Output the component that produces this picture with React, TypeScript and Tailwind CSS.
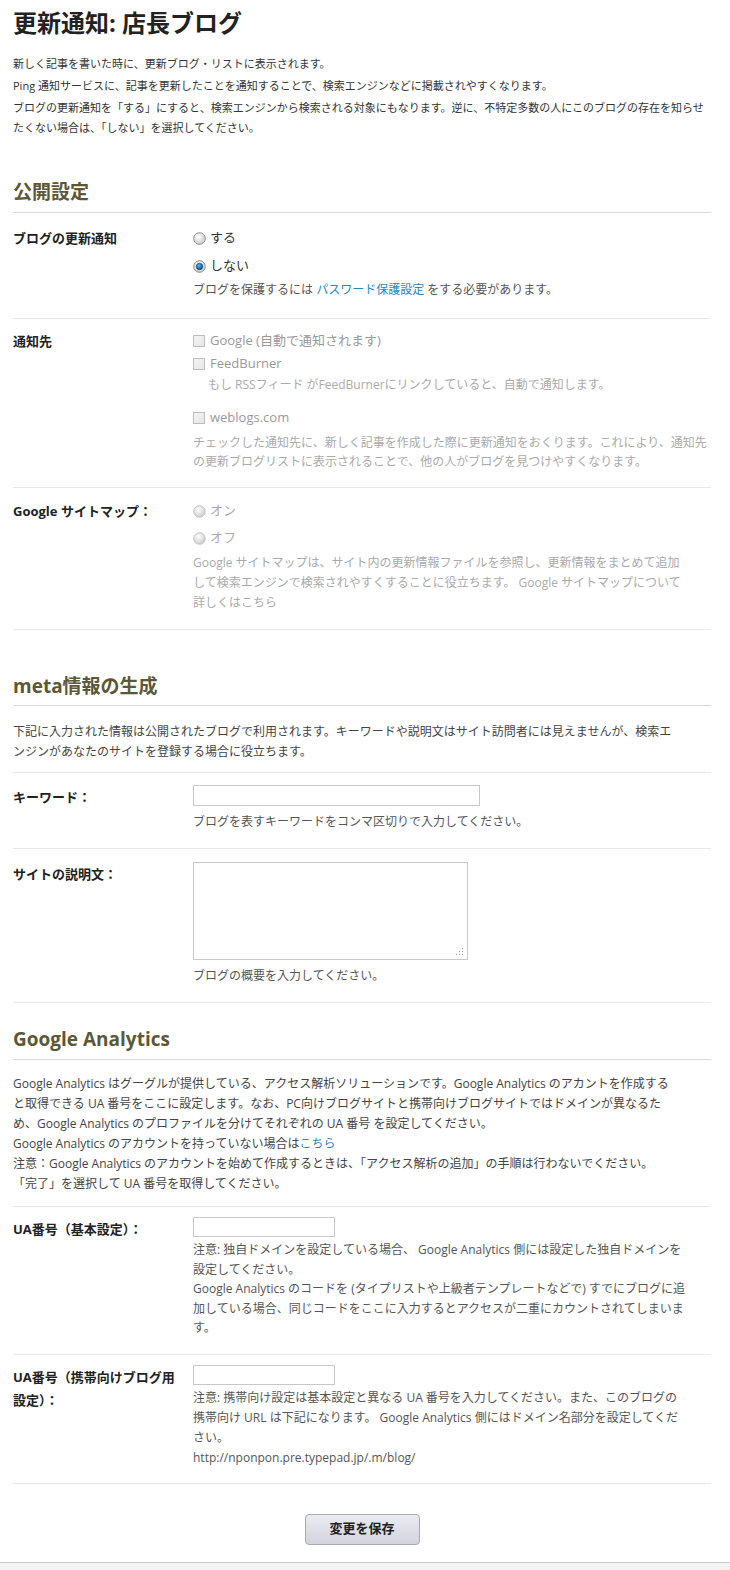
import React from "react";

const FONT = "font-['Open_Sans','Noto_Sans_CJK_JP',sans-serif]";

function Radio({ checked, disabled }: { checked?: boolean; disabled?: boolean }) {
  return (
    <svg width="13" height="13" viewBox="0 0 13 13" className="shrink-0 mr-[4px]">
      <defs>
        <radialGradient id="rg" cx="40%" cy="35%" r="70%">
          <stop offset="0%" stopColor="#ffffff" />
          <stop offset="100%" stopColor={disabled ? "#d6d6d6" : "#c8c8c8"} />
        </radialGradient>
        <radialGradient id="rb" cx="40%" cy="35%" r="65%">
          <stop offset="0%" stopColor="#5fb3ee" />
          <stop offset="100%" stopColor="#0b4f8a" />
        </radialGradient>
      </defs>
      <circle cx="6.5" cy="6.5" r="5.8" fill="url(#rg)" stroke={disabled ? "#c4c4c4" : "#8e8e8e"} strokeWidth="1" />
      {checked && <circle cx="6.5" cy="6.5" r="3.2" fill="url(#rb)" stroke="#0a3a66" strokeWidth="0.6" />}
    </svg>
  );
}

function Check() {
  return (
    <span className="inline-block w-[12px] h-[12px] mr-[5px] shrink-0 border border-[#bdbdbd] bg-gradient-to-br from-[#f4f4f4] to-[#e6e6e6]" />
  );
}

function Row({
  label,
  children,
  pt,
  pb,
  labelPt,
}: {
  label: React.ReactNode;
  children: React.ReactNode;
  pt: string;
  pb: string;
  labelPt?: string;
}) {
  return (
    <div className={`flex border-b border-[#e4e8ec] ${pb}`}>
      <div className={`w-[180px] shrink-0 text-[13px] font-bold leading-[20px] text-[#222] ${labelPt ?? pt}`}>{label}</div>
      <div className={`flex-1 ${pt}`}>{children}</div>
    </div>
  );
}

export default function App() {
  return (
    <div className={`w-[730px] min-h-[1570px] bg-white text-[#333] ${FONT}`}>
      <div className="pl-[13px] pr-[19px]">
        <h1 className="pt-[9px] text-[24px] leading-[28px] font-bold text-[#222] whitespace-nowrap">更新通知: 店長ブログ</h1>

        <div className="mt-[17px] text-[11px] leading-[20px] text-[#333]">
          <p>新しく記事を書いた時に、更新ブログ・リストに表示されます。</p>
          <p className="mt-[2px]">Ping 通知サービスに、記事を更新したことを通知することで、検索エンジンなどに掲載されやすくなります。</p>
          <p className="mt-[2px] whitespace-nowrap">
            ブログの更新通知を「する」にすると、検索エンジンから検索される対象にもなります。逆に、不特定多数の人にこのブログの存在を知らせ
            <br />
            たくない場合は、「しない」を選択してください。
          </p>
        </div>

        <h2 className="mt-[42px] pb-[8px] text-[19px] leading-[24px] font-bold text-[#5c5837] border-b border-[#d9d9d9]">公開設定</h2>

        <Row label="ブログの更新通知" pt="pt-[15px]" pb="pb-[18px]">
          <div className="flex items-center h-[20px] text-[13px] text-[#333]">
            <Radio />
            する
          </div>
          <div className="mt-[8px] flex items-center h-[20px] text-[13px] text-[#333]">
            <Radio checked />
            しない
          </div>
          <p className="mt-[4px] text-[12px] leading-[20px] text-[#555]">
            ブログを保護するには <span className="text-[#1f86c4]">パスワード保護設定</span> をする必要があります。
          </p>
        </Row>

        <Row label="通知先" pt="pt-[12px]" pb="pb-[16px]">
          <div className="flex items-center h-[20px] text-[13px] text-[#999]">
            <Check />
            Google (自動で通知されます)
          </div>
          <div className="mt-[3px] flex items-center h-[20px] text-[13px] text-[#999]">
            <Check />
            FeedBurner
          </div>
          <p className="mt-[1px] pl-[15px] text-[12px] leading-[20px] text-[#aaa]">もし RSSフィード がFeedBurnerにリンクしていると、自動で通知します。</p>
          <div className="mt-[13px] flex items-center h-[20px] text-[13px] text-[#999]">
            <Check />
            weblogs.com
          </div>
          <p className="mt-[5px] text-[12px] leading-[19px] text-[#aaa] whitespace-nowrap">
            チェックした通知先に、新しく記事を作成した際に更新通知をおくります。これにより、通知先
            <br />
            の更新ブログリストに表示されることで、他の人がブログを見つけやすくなります。
          </p>
        </Row>

        <Row label="Google サイトマップ：" pt="pt-[13px]" pb="pb-[16px]">
          <div className="flex items-center h-[20px] text-[13px] text-[#aaa]">
            <Radio disabled />
            オン
          </div>
          <div className="mt-[7px] flex items-center h-[20px] text-[13px] text-[#aaa]">
            <Radio disabled />
            オフ
          </div>
          <p className="mt-[5px] text-[12px] leading-[20px] text-[#aaa] whitespace-nowrap">
            Google サイトマップは、サイト内の更新情報ファイルを参照し、更新情報をまとめて追加
            <br />
            して検索エンジンで検索されやすくすることに役立ちます。 Google サイトマップについて
            <br />
            詳しくはこちら
          </p>
        </Row>

        <h2 className="mt-[44px] pb-[7px] text-[19px] leading-[24px] font-bold text-[#5c5837] border-b border-[#d9d9d9]">meta情報の生成</h2>

        <p className="pt-[16px] pb-[10px] text-[12px] leading-[20px] text-[#444] border-b border-[#e4e8ec] whitespace-nowrap">
          下記に入力された情報は公開されたブログで利用されます。キーワードや説明文はサイト訪問者には見えませんが、検索エ
          <br />
          ンジンがあなたのサイトを登録する場合に役立ちます。
        </p>

        <Row label="キーワード：" pt="pt-[12px]" labelPt="pt-[14px]" pb="pb-[16px]">
          <div className="w-[287px] h-[21px] border border-[#c8c8c8] bg-white" />
          <p className="mt-[6px] text-[12px] leading-[20px] text-[#555]">ブログを表すキーワードをコンマ区切りで入力してください。</p>
        </Row>

        <Row label="サイトの説明文：" pt="pt-[13px]" labelPt="pt-[15px]" pb="pb-[16px]">
          <div className="relative w-[275px] h-[98px] border border-[#c8c8c8] bg-white">
            <svg width="9" height="9" viewBox="0 0 9 9" className="absolute right-[3px] bottom-[3px]">
              <rect x="7" y="1" width="1" height="1" fill="#999" />
              <rect x="7" y="4" width="1" height="1" fill="#999" />
              <rect x="4" y="4" width="1" height="1" fill="#999" />
              <rect x="7" y="7" width="1" height="1" fill="#999" />
              <rect x="4" y="7" width="1" height="1" fill="#999" />
              <rect x="1" y="7" width="1" height="1" fill="#999" />
            </svg>
          </div>
          <p className="mt-[6px] text-[12px] leading-[20px] text-[#555]">ブログの概要を入力してください。</p>
        </Row>

        <h2 className="mt-[24px] pb-[8px] text-[19px] leading-[24px] font-bold text-[#5c5837] border-b border-[#d9d9d9]">Google Analytics</h2>

        <div className="pt-[14px] pb-[12px] text-[12px] leading-[20px] text-[#444] border-b border-[#e4e8ec] whitespace-nowrap">
          Google Analytics はグーグルが提供している、アクセス解析ソリューションです。Google Analytics のアカントを作成する
          <br />
          と取得できる UA 番号をここに設定します。なお、PC向けブログサイトと携帯向けブログサイトではドメインが異なるた
          <br />
          め、Google Analytics のプロファイルを分けてそれぞれの UA 番号 を設定してください。
          <br />
          Google Analytics のアカウントを持っていない場合は<span className="text-[#1f86c4]">こちら</span>
          <br />
          注意：Google Analytics のアカウントを始めて作成するときは、「アクセス解析の追加」の手順は行わないでください。
          <br />
          「完了」を選択して UA 番号を取得してください。
        </div>

        <Row label="UA番号（基本設定）：" pt="pt-[10px]" labelPt="pt-[12px]" pb="pb-[16px]">
          <div className="w-[142px] h-[20px] border border-[#c8c8c8] bg-white" />
          <p className="mt-[3px] text-[12px] leading-[19.5px] text-[#555] whitespace-nowrap">
            注意: 独自ドメインを設定している場合、 Google Analytics 側には設定した独自ドメインを
            <br />
            設定してください。
            <br />
            Google Analytics のコードを (タイプリストや上級者テンプレートなどで) すでにブログに追
            <br />
            加している場合、同じコードをここに入力するとアクセスが二重にカウントされてしまいま
            <br />
            す。
          </p>
        </Row>

        <div className="flex border-b border-[#e4e8ec] pb-[15px]">
          <div className="w-[180px] shrink-0 pt-[11px] text-[13px] font-bold leading-[23px] text-[#222]">
            UA番号（携帯向けブログ用
            <br />
            設定）：
          </div>
          <div className="flex-1 pt-[10px]">
            <div className="w-[142px] h-[20px] border border-[#c8c8c8] bg-white" />
            <p className="mt-[3px] text-[12px] leading-[20px] text-[#555] whitespace-nowrap">
              注意: 携帯向け設定は基本設定と異なる UA 番号を入力してください。また、このブログの
              <br />
              携帯向け URL は下記になります。 Google Analytics 側にはドメイン名部分を設定してくだ
              <br />
              さい。
              <br />
              http://nponpon.pre.typepad.jp/.m/blog/
            </p>
          </div>
        </div>

        <div className="flex justify-center pt-[30px] pb-[17px]">
          <button className="w-[115px] h-[31px] rounded-[4px] border border-[#a9a9b3] bg-gradient-to-b from-[#ebebf1] to-[#d3d3de] text-[13px] font-bold text-[#222]">
            変更を保存
          </button>
        </div>
      </div>
      <div className="border-t border-[#c9c9c9] bg-[#f4f4f4] h-[9px]" />
    </div>
  );
}
